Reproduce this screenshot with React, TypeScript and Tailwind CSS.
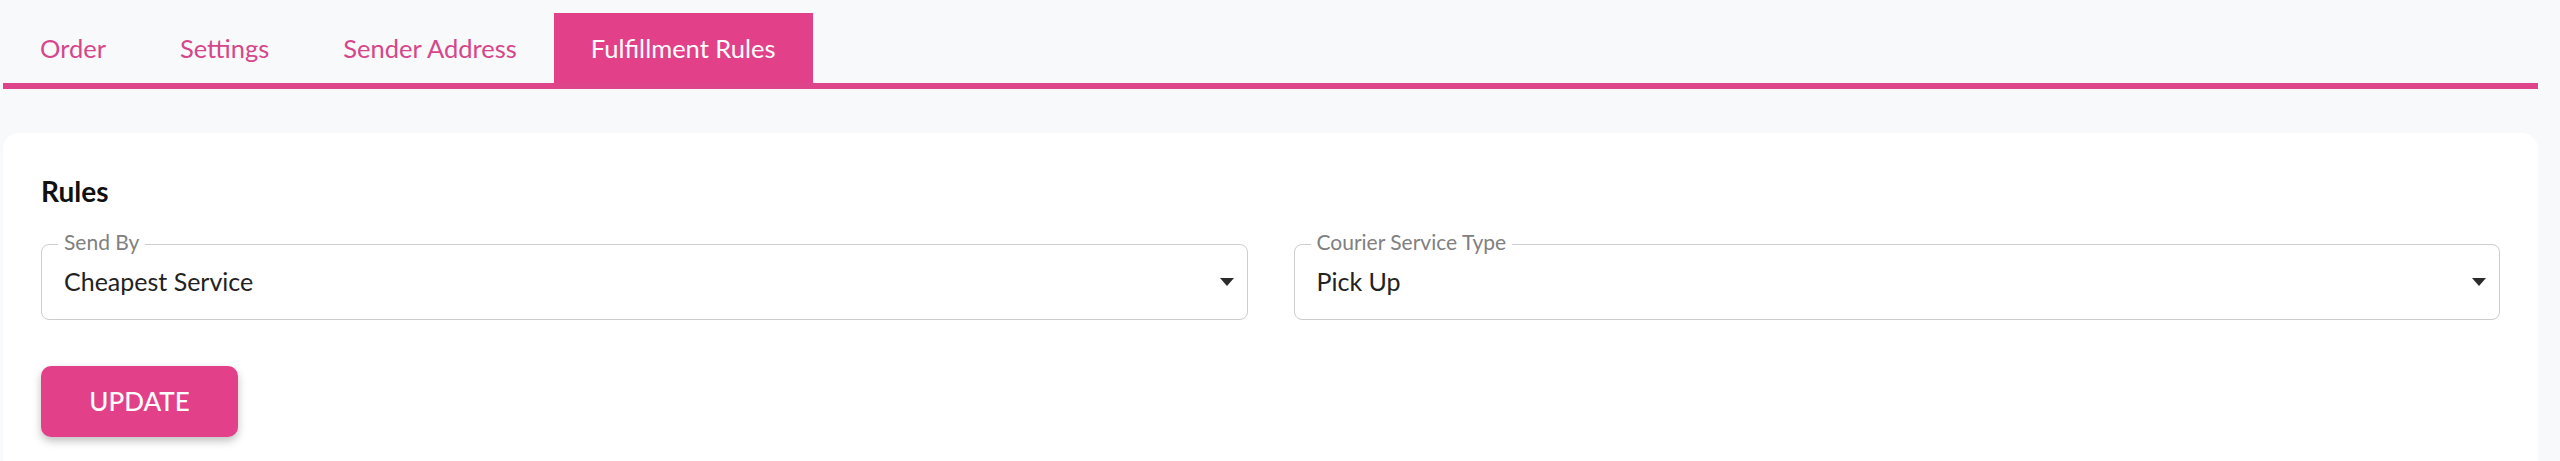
import React from 'react';

const tabs = ['Order', 'Settings', 'Sender Address', 'Fulfillment Rules'];

function Caret() {
  return (
    <svg width="14" height="8" viewBox="0 0 14 8" className="absolute right-[13px] top-1/2 -translate-y-1/2">
      <path d="M0 0 L14 0 L7 8 Z" fill="#2b2b2b" />
    </svg>
  );
}

function SelectField({ label, value }: { label: string; value: string }) {
  return (
    <div className="relative flex h-[76px] flex-1 items-center rounded-lg border-[1.5px] border-[#cdcdcd] bg-white pl-[22px]">
      <span className="absolute left-[16px] top-[-14px] bg-white px-[6px] text-[21px] leading-[21px] text-[#808080]">
        {label}
      </span>
      <span className="text-[25px] text-[#222]">{value}</span>
      <Caret />
    </div>
  );
}

export default function App() {
  return (
    <div
      className="h-[461px] w-full overflow-hidden bg-[#f8f9fb] pl-[3px] pr-[22px] pt-[13px]"
      style={{ fontFamily: 'Lato, "Open Sans", sans-serif' }}
    >
      {/* Tabs */}
      <div className="flex h-[76px] border-b-[6px] border-[#de4489]">
        {tabs.map((t, i) => (
          <div
            key={t}
            className={
              i === 3
                ? 'flex items-center bg-[#e2418a] px-[37px] text-[25.5px] text-white'
                : 'flex items-center px-[37px] text-[25.5px] text-[#d5468a]'
            }
          >
            {t}
          </div>
        ))}
      </div>

      {/* Rules card */}
      <div className="mt-[44px] h-[400px] rounded-2xl bg-white px-[38px] pt-[42px]">
        <h2 className="text-[28px] font-bold leading-[32px] text-[#111]">Rules</h2>
        <div className="mt-[37px] flex gap-[46px]">
          <SelectField label="Send By" value="Cheapest Service" />
          <SelectField label="Courier Service Type" value="Pick Up" />
        </div>
        <button className="mt-[46px] h-[71px] w-[197px] rounded-[10px] bg-[#e2418a] text-[26px] font-medium uppercase text-white shadow-[0_4px_8px_rgba(0,0,0,0.25)]">
          Update
        </button>
      </div>
    </div>
  );
}
